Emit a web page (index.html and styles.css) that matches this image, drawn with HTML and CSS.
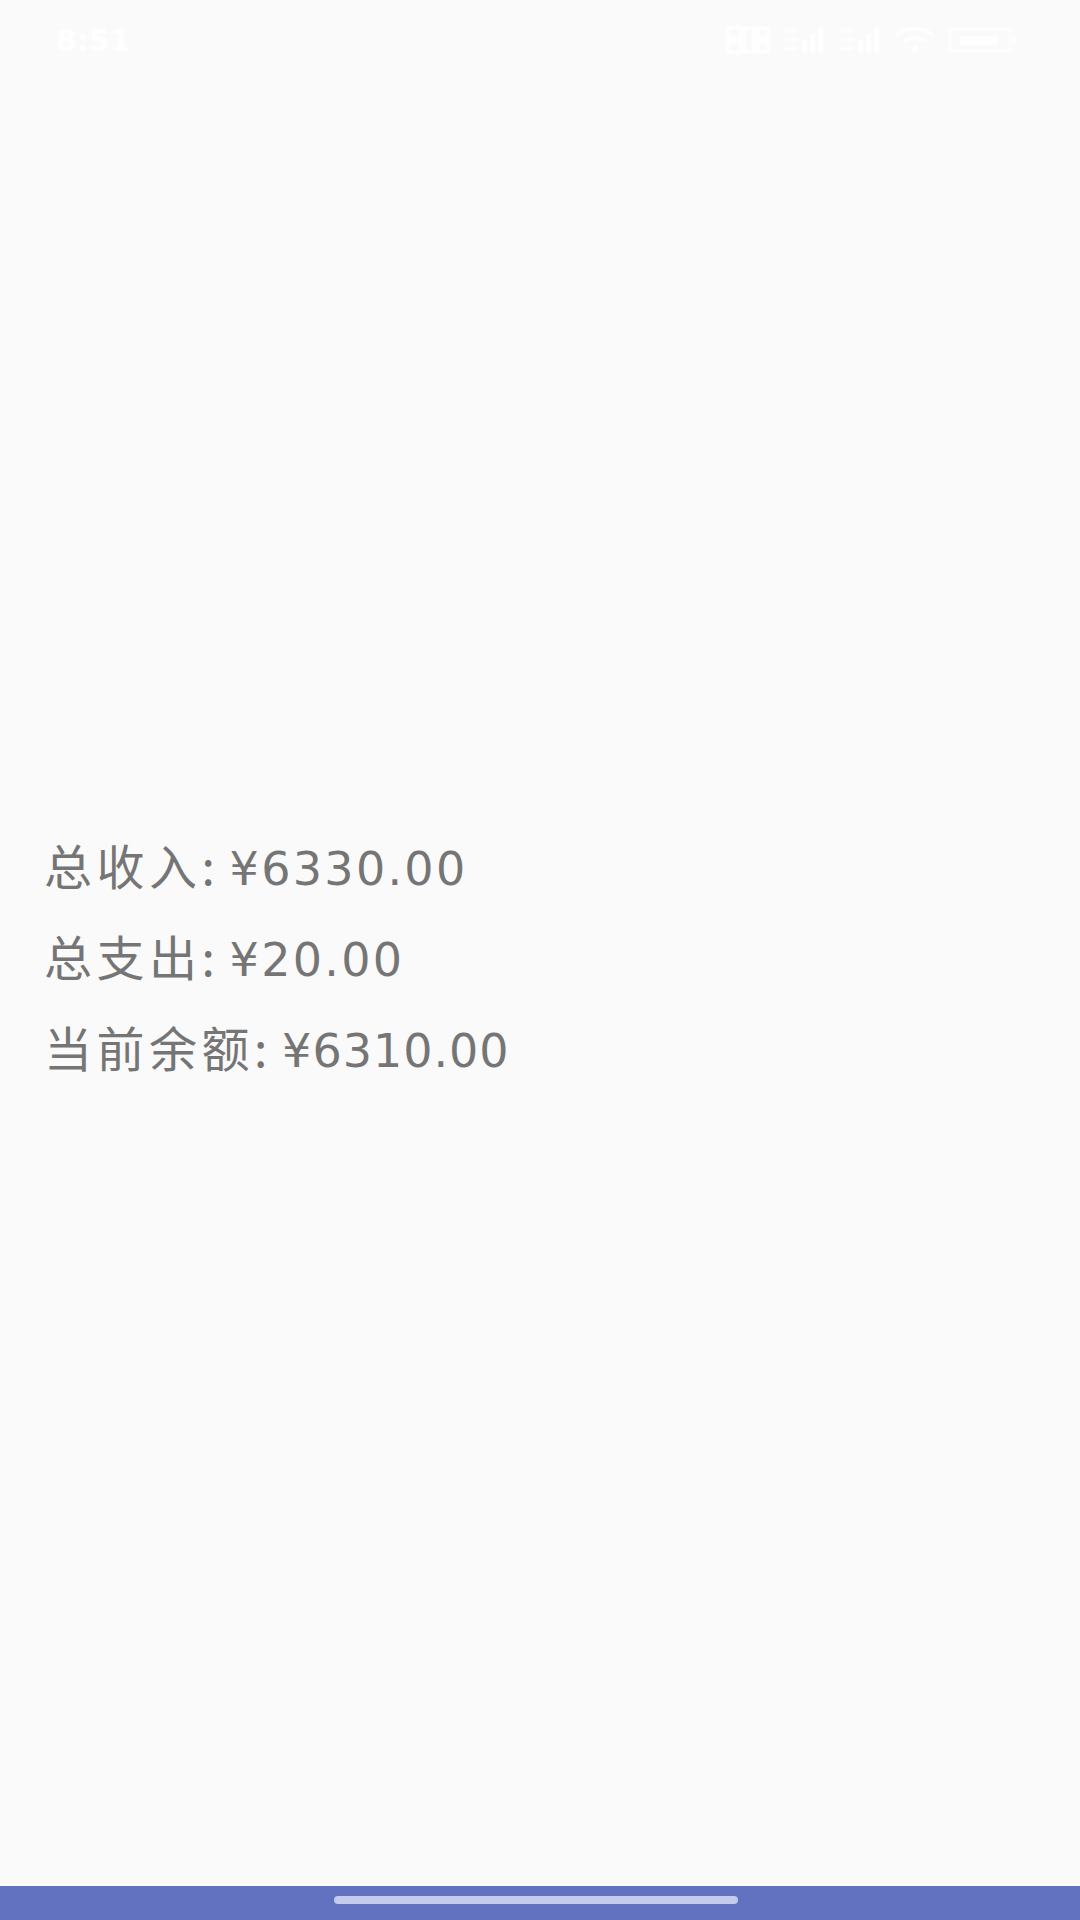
FILE: index.html
```html
<!DOCTYPE html>
<html lang="zh-CN">
<head>
    <meta charset="UTF-8">
    <meta name="viewport" content="width=device-width, initial-scale=1.0">
    <title>余额</title>
    <link rel="stylesheet" href="styles.css">
</head>
<body>
    <header class="status-bar">
        <span class="status-time">8:51</span>
        <div class="status-icons">
            <svg class="icon-net" viewBox="0 0 44 32" width="44" height="32">
                <path d="M2 4h12v10H2zM2 18h12v10H2zM18 4h10v24H18zM32 4h10v10H32zM32 18h10v10H32z" fill="none" stroke="#fff" stroke-width="3"/>
            </svg>
            <svg class="icon-signal" viewBox="0 0 44 32" width="44" height="32">
                <path d="M1 5h15v3H1zM1 14h15v3H1zM1 23h15v3H1zM20 16h5v13h-5zM28 10h5v19h-5zM36 3h5v26h-5z" fill="#fff"/>
            </svg>
            <svg class="icon-signal" viewBox="0 0 44 32" width="44" height="32">
                <path d="M1 5h15v3H1zM1 14h15v3H1zM1 23h15v3H1zM20 16h5v13h-5zM28 10h5v19h-5zM36 3h5v26h-5z" fill="#fff"/>
            </svg>
            <svg class="icon-wifi" viewBox="0 0 42 28" width="42" height="28">
                <path d="M2 10a28 28 0 0 1 38 0M9 16a18 18 0 0 1 24 0" fill="none" stroke="#fff" stroke-width="3"/>
                <circle cx="21" cy="23" r="3.5" fill="#fff"/>
            </svg>
            <svg class="icon-battery" viewBox="0 0 70 28" width="70" height="28">
                <rect x="2" y="3" width="60" height="22" rx="2" fill="none" stroke="#fff" stroke-width="2"/>
                <rect x="12" y="10" width="38" height="9" fill="#fff"/>
                <rect x="64" y="10" width="4" height="8" fill="#fff"/>
            </svg>
        </div>
    </header>

    <main class="summary">
        <p class="summary-line">总收入: <span class="amount">¥6330.00</span></p>
        <p class="summary-line">总支出: <span class="amount">¥20.00</span></p>
        <p class="summary-line">当前余额: <span class="amount amount-tight">¥6310.00</span></p>
    </main>

    <footer class="nav-bar">
        <div class="nav-handle"></div>
    </footer>
</body>
</html>
```

FILE: styles.css
```css
* {
    box-sizing: border-box;
}

html,
body {
    height: 100%;
}

body {
    margin: 0;
    display: flex;
    flex-direction: column;
    background-color: #fafafa;
    font-family: "DejaVu Sans", "Noto Sans CJK SC", sans-serif;
}

/* 状态栏：白色图标，几乎看不出来 */
.status-bar {
    height: 64px;
    padding: 16px 62px 0 56px;
    display: flex;
    justify-content: space-between;
    align-items: center;
    color: #fff;
}

.status-time {
    font-size: 30px;
    font-weight: 600;
    filter: blur(1px);
}

.status-icons {
    display: flex;
    align-items: center;
    gap: 12px;
    filter: blur(1px);
}

.summary {
    flex: 1;
    display: flex;
    flex-direction: column;
    justify-content: center;
    gap: 34px;
    padding: 0 44px 39px;
}

.summary-line {
    margin: 0;
    font-family: "Noto Sans CJK SC", sans-serif;
    font-size: 48px;
    line-height: 57px;
    letter-spacing: 4.5px;
    color: #757575;
}

.amount {
    margin-left: -5px;
    font-family: "DejaVu Sans", "Noto Sans CJK SC", sans-serif;
    font-size: 46px;
    line-height: 1;
    letter-spacing: 2.3px;
}

/* 等宽数字里的1太宽，整串收紧一点 */
.amount-tight {
    letter-spacing: 1px;
}

.nav-bar {
    height: 34px;
    padding-top: 10px;
    background-color: #6272c0;
}

.nav-handle {
    width: 404px;
    height: 8px;
    margin-left: 334px;
    border-radius: 4px;
    background-color: #c5cbea;
}
```
